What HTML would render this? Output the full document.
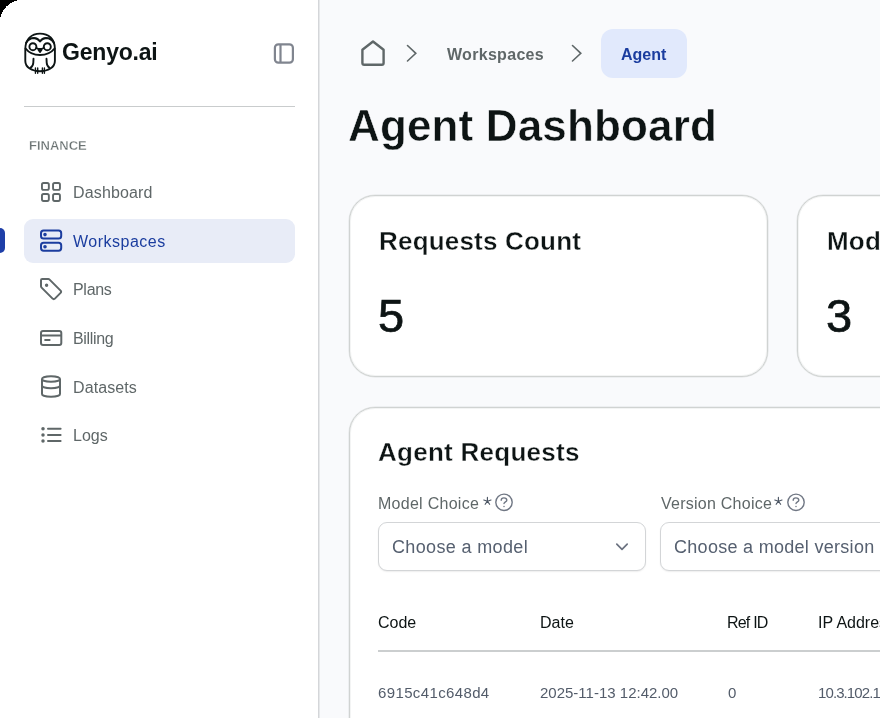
<!DOCTYPE html>
<html><head><meta charset="utf-8">
<style>
*{margin:0;padding:0;box-sizing:border-box;-webkit-font-smoothing:antialiased}
html,body{width:880px;height:718px;overflow:hidden;background:#f9fafc;font-family:"Liberation Sans",sans-serif}
.abs{position:absolute}
#side{position:absolute;left:0;top:0;width:319px;height:718px;background:#fff;border-right:1px solid #d4d6d9;box-shadow:1px 0 0 #e6e8ea}
.t{position:absolute;white-space:nowrap;line-height:1;will-change:transform}
.nav{color:#5f6768;font-size:16px}
svg{position:absolute;overflow:visible}
</style></head><body>
<div id="side">
  <!-- owl -->
  <svg style="left:22px;top:30px" width="36" height="46" viewBox="0 0 36 46" fill="none" stroke="#0d1414" stroke-width="1.9" stroke-linecap="round" stroke-linejoin="round">
    <path d="M3.3 19 C3.3 9 9.5 3.6 18 3.6 C26.5 3.6 32.9 9 32.9 19 L32.9 31 C32.9 37.5 26 41.2 18 41.2 C10 41.2 3.3 37.5 3.3 31 Z"/>
    <path d="M4 13 C6 9.5 9.5 8 12 8 C15 8.2 17 10 18 11.5 C19 10 21 8.2 24 8 C26.5 8 30 9.5 32 13"/>
    <path d="M3.6 18.5 C7 23 12 25 18 25 C24 25 29 23 32.6 18.5"/>
    <circle cx="10.9" cy="16.7" r="3.5"/>
    <circle cx="25.3" cy="16.7" r="3.5"/>
    <path d="M14.4 18 Q18 20 21.6 18 M16.3 19.4 L18 21.9 L19.7 19.4"/>
    <path d="M11.5 28.8 L11.3 32.8 C11.2 35.2 10 36.9 8.5 37.9 M24.5 28.8 L24.7 32.8 C24.8 35.2 26 36.9 27.5 37.9"/>
    <path d="M13.45 38 V43.3 M15.7 38 V43.3 M20.4 38 V43.3 M22.4 38 V43.3" stroke-width="1.4"/>
  </svg>
  <div class="t" style="left:62px;top:41px;font-size:23px;font-weight:bold;color:#0d1414;letter-spacing:-0.2px">Genyo.ai</div>
  <!-- collapse icon -->
  <svg style="left:272px;top:42px" width="24" height="24" viewBox="0 0 24 24" fill="none" stroke="#80858f" stroke-width="2.2">
    <rect x="2.9" y="2.4" width="18" height="18.3" rx="3.4"/>
    <path d="M8.5 2.4 V20.7"/>
  </svg>
  <div class="abs" style="left:24px;top:106px;width:271px;height:1px;background:#c9cccd"></div>
  <div class="t" style="left:29px;top:139px;font-size:13px;font-weight:bold;color:#6a7272;-webkit-text-stroke:0.3px #fff">FINANCE</div>

  <!-- active bg -->
  <div class="abs" style="left:24px;top:219px;width:271px;height:44px;background:#e8ecf7;border-radius:9px"></div>
  <div class="abs" style="left:-5px;top:228px;width:10px;height:25px;background:#1e3fa8;border-radius:5px"></div>

  <!-- Dashboard -->
  <svg style="left:36px;top:176px" width="30" height="30" viewBox="0 0 30 30" fill="none" stroke="#5f6768" stroke-width="1.9">
    <rect x="5.95" y="6.95" width="6.9" height="6.9" rx="1.6"/>
    <rect x="17.05" y="6.95" width="6.9" height="6.9" rx="1.6"/>
    <rect x="5.95" y="18.05" width="6.9" height="6.9" rx="1.6"/>
    <rect x="17.05" y="18.05" width="6.9" height="6.9" rx="1.6"/>
  </svg>
  <div class="t nav" style="left:72.5px;top:185px;letter-spacing:0.15px">Dashboard</div>

  <!-- Workspaces -->
  <svg style="left:35.5px;top:225px" width="30" height="30" viewBox="0 0 30 30" fill="none" stroke="#1b3d9f" stroke-width="2">
    <rect x="5" y="5.6" width="20.2" height="8" rx="2.6"/>
    <rect x="5" y="17.7" width="20.2" height="8" rx="2.6"/>
    <circle cx="9" cy="9.6" r="0.8" fill="#1b3d9f"/>
    <circle cx="9" cy="21.7" r="0.8" fill="#1b3d9f"/>
  </svg>
  <div class="t nav" style="left:72.5px;top:234px;color:#1b3d9f;letter-spacing:0.5px">Workspaces</div>

  <!-- Plans -->
  <svg style="left:36px;top:274px" width="30" height="30" viewBox="0 0 30 30" fill="none" stroke="#5f6768" stroke-width="2" stroke-linejoin="round">
    <path d="M5 6.2 C5 5.4 5.4 5 6.2 5 L12.3 5 C12.8 5 13.2 5.2 13.6 5.6 L24.6 16.6 C25.3 17.3 25.3 18.2 24.6 18.9 L18.9 24.6 C18.2 25.3 17.3 25.3 16.6 24.6 L5.6 13.6 C5.2 13.2 5 12.8 5 12.3 Z"/>
    <circle cx="10.6" cy="11.3" r="0.7" fill="#5f6768"/>
  </svg>
  <div class="t nav" style="left:72.5px;top:282px;letter-spacing:-0.3px">Plans</div>

  <!-- Billing -->
  <svg style="left:36px;top:325px" width="30" height="30" viewBox="0 0 30 30" fill="none" stroke="#5f6768" stroke-width="2">
    <rect x="5" y="6" width="20.3" height="14.1" rx="2"/>
    <path d="M5 10.4 H25.3 M8.4 15.1 H14.4"/>
  </svg>
  <div class="t nav" style="left:72.5px;top:331px;letter-spacing:-0.35px">Billing</div>

  <!-- Datasets -->
  <svg style="left:36px;top:371px" width="30" height="30" viewBox="0 0 30 30" fill="none" stroke="#5f6768" stroke-width="2">
    <ellipse cx="15" cy="8" rx="9" ry="2.8"/>
    <path d="M6 8 V22.9 C6 24.5 10 25.7 15 25.7 C20 25.7 24 24.5 24 22.9 V8"/>
    <path d="M6 14.5 C6 16.1 10 17.3 15 17.3 C20 17.3 24 16.1 24 14.5"/>
  </svg>
  <div class="t nav" style="left:72.5px;top:380px;letter-spacing:0.1px">Datasets</div>

  <!-- Logs -->
  <svg style="left:36px;top:420px" width="30" height="30" viewBox="0 0 30 30" fill="none" stroke="#5f6768" stroke-width="2" stroke-linecap="round">
    <path d="M12 8.8 H24.6 M12 15 H24.6 M12 21 H24.6"/>
    <circle cx="7" cy="8.8" r="1.75" fill="#5f6768" stroke="none"/>
    <circle cx="7" cy="15" r="1.75" fill="#5f6768" stroke="none"/>
    <circle cx="7" cy="21" r="1.75" fill="#5f6768" stroke="none"/>
  </svg>
  <div class="t nav" style="left:72.5px;top:428px">Logs</div>
</div>

<!-- corner -->
<svg style="left:0;top:0" width="24" height="24" viewBox="0 0 24 24" shape-rendering="crispEdges"><path d="M0 0 H22 A22 22 0 0 0 0 22 Z" fill="#000"/></svg>

<!-- breadcrumb -->
<svg style="left:356px;top:35px" width="34" height="36" viewBox="0 0 34 36" fill="none" stroke="#5f6768" stroke-width="2.4" stroke-linejoin="round">
  <path d="M17 6.5 L27.6 14.7 V28 C27.6 29.1 27 29.8 25.8 29.8 H8.2 C7 29.8 6.4 29.1 6.4 28 V14.7 Z"/>
</svg>
<svg style="left:400px;top:40px" width="24" height="26" viewBox="0 0 24 26" fill="none" stroke="#5f6768" stroke-width="1.6" stroke-linecap="round">
  <path d="M7.5 5.5 L15.8 13.3 L7.5 21"/>
</svg>
<div class="t" style="left:446.5px;top:47px;font-size:16px;font-weight:bold;color:#5f6768;letter-spacing:0.3px">Workspaces</div>
<svg style="left:565px;top:40px" width="24" height="26" viewBox="0 0 24 26" fill="none" stroke="#5f6768" stroke-width="1.6" stroke-linecap="round">
  <path d="M7.5 5.5 L15.8 13.3 L7.5 21"/>
</svg>
<div class="abs" style="left:601px;top:29px;width:86px;height:49px;background:#e1e9fc;border-radius:12px"></div>
<div class="t" style="left:621px;top:47px;font-size:16px;font-weight:bold;color:#1b3d9f">Agent</div>

<div class="t" style="left:348px;top:104px;font-size:44px;font-weight:bold;color:#0d1414;letter-spacing:0.15px;-webkit-text-stroke:0.5px #f9fafc">Agent Dashboard</div>

<!-- stat cards -->
<div class="abs" style="left:349px;top:195px;width:419px;height:182px;background:#fff;border:1px solid #d0d3d2;border-radius:26px;box-shadow:0 0 0 0.5px rgba(205,209,207,0.5), inset 0 0 0 1px rgba(215,218,217,0.3)"></div>
<div class="t" style="left:379px;top:228px;font-size:26px;font-weight:bold;color:#0d1414;letter-spacing:0.2px;-webkit-text-stroke:0.35px #fff">Requests Count</div>
<div class="t" style="left:377.5px;top:292px;font-size:47px;color:#0d1414;-webkit-text-stroke:0.7px #0d1414">5</div>

<div class="abs" style="left:797px;top:195px;width:419px;height:182px;background:#fff;border:1px solid #d0d3d2;border-radius:26px;box-shadow:0 0 0 0.5px rgba(205,209,207,0.5), inset 0 0 0 1px rgba(215,218,217,0.3)"></div>
<div class="t" style="left:827px;top:228px;font-size:26px;font-weight:bold;color:#0d1414;letter-spacing:0.2px;-webkit-text-stroke:0.35px #fff">Models Count</div>
<div class="t" style="left:825.5px;top:292px;font-size:47px;color:#0d1414;-webkit-text-stroke:0.7px #0d1414">3</div>

<!-- requests card -->
<div class="abs" style="left:349px;top:407px;width:700px;height:400px;background:#fff;border:1px solid #d0d3d2;border-radius:26px;box-shadow:0 0 0 0.5px rgba(205,209,207,0.5), inset 0 0 0 1px rgba(215,218,217,0.3)"></div>
<div class="t" style="left:378px;top:439px;font-size:26px;font-weight:bold;color:#0d1414;letter-spacing:0.27px;-webkit-text-stroke:0.35px #fff">Agent Requests</div>

<div class="t" style="left:378px;top:496px;font-size:16px;color:#5f6768;letter-spacing:0.27px">Model Choice</div>
<svg style="left:480.9px;top:494.8px" width="12" height="12" viewBox="0 0 12 12" fill="none" stroke="#4b5563" stroke-width="1.15" stroke-linecap="round"><path d="M6.4 6.2 V2.4 M6.4 6.2 L10 5.03 M6.4 6.2 L8.63 9.27 M6.4 6.2 L4.17 9.27 M6.4 6.2 L2.8 5.03"/></svg>
<svg style="left:494.1px;top:492px" width="20" height="20" viewBox="0 0 20 20" fill="none" stroke="#707784" stroke-width="1.4" stroke-linecap="round">
  <circle cx="10" cy="10.3" r="8.2"/>
  <path d="M7.2 8.2 C7.2 6.5 8.3 5.9 9.9 5.9 C11.5 5.9 12.8 6.8 12.8 8.2 C12.8 9.8 10 9.9 10 11.6"/>
  <circle cx="10" cy="14.5" r="0.75" fill="#707784" stroke="none"/>
</svg>
<div class="abs" style="left:378px;top:522px;width:268px;height:48.5px;background:#fff;border:1px solid #d3d5d7;border-radius:9px;box-shadow:0 1px 1.5px rgba(0,0,0,0.07)"></div>
<div class="t" style="left:392px;top:538px;font-size:18px;color:#566070;letter-spacing:0.35px">Choose a model</div>
<svg style="left:612px;top:536.5px" width="20" height="20" viewBox="0 0 20 20" fill="none" stroke="#6b7280" stroke-width="1.7" stroke-linecap="round" stroke-linejoin="round">
  <path d="M4.8 7.2 L10 12.4 L15.2 7.2"/>
</svg>

<div class="t" style="left:660.5px;top:496px;font-size:16px;color:#5f6768;letter-spacing:0.25px">Version Choice</div>
<svg style="left:772.3px;top:494.8px" width="12" height="12" viewBox="0 0 12 12" fill="none" stroke="#4b5563" stroke-width="1.15" stroke-linecap="round"><path d="M6.4 6.2 V2.4 M6.4 6.2 L10 5.03 M6.4 6.2 L8.63 9.27 M6.4 6.2 L4.17 9.27 M6.4 6.2 L2.8 5.03"/></svg>
<svg style="left:785.8px;top:492px" width="20" height="20" viewBox="0 0 20 20" fill="none" stroke="#707784" stroke-width="1.4" stroke-linecap="round">
  <circle cx="10" cy="10.3" r="8.2"/>
  <path d="M7.2 8.2 C7.2 6.5 8.3 5.9 9.9 5.9 C11.5 5.9 12.8 6.8 12.8 8.2 C12.8 9.8 10 9.9 10 11.6"/>
  <circle cx="10" cy="14.5" r="0.75" fill="#707784" stroke="none"/>
</svg>
<div class="abs" style="left:660px;top:522px;width:300px;height:48.5px;background:#fff;border:1px solid #d3d5d7;border-radius:9px;box-shadow:0 1px 1.5px rgba(0,0,0,0.07)"></div>
<div class="t" style="left:674px;top:538px;font-size:18px;color:#566070;letter-spacing:0.29px">Choose a model version</div>

<!-- table -->
<div class="t" style="left:378px;top:615px;font-size:16px;color:#0d1414">Code</div>
<div class="t" style="left:540px;top:615px;font-size:16px;color:#0d1414">Date</div>
<div class="t" style="left:727px;top:615px;font-size:16px;color:#0d1414;letter-spacing:-0.8px">Ref ID</div>
<div class="t" style="left:818px;top:615px;font-size:16px;color:#0d1414">IP Address</div>
<div class="abs" style="left:378px;top:650px;width:600px;height:2px;background:#cbcecf"></div>
<div class="t" style="left:378px;top:685px;font-size:15px;color:#535c6a;letter-spacing:0.37px">6915c41c648d4</div>
<div class="t" style="left:540px;top:685px;font-size:15px;color:#535c6a">2025-11-13 12:42.00</div>
<div class="t" style="left:728px;top:685px;font-size:15px;color:#535c6a">0</div>
<div class="t" style="left:818px;top:685px;font-size:15px;color:#535c6a;letter-spacing:-0.9px">10.3.102.192</div>
</body></html>
